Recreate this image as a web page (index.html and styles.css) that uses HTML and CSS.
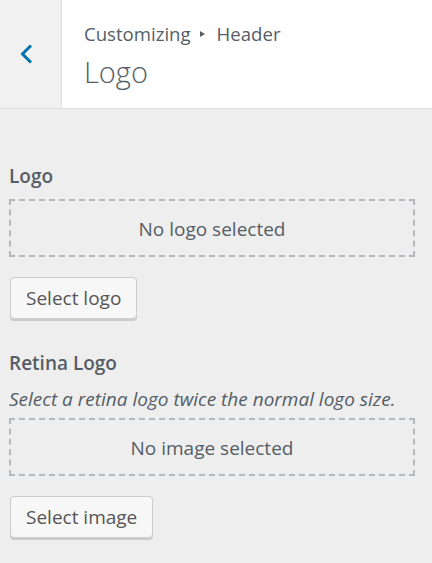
FILE: index.html
```html
<!DOCTYPE html>
<html>
<head>
<meta charset="utf-8">
<link rel="stylesheet" href="styles.css">
</head>
<body>
<div class="panel">
  <header class="head">
    <button class="back" aria-label="Back">
      <svg width="14" height="20" viewBox="0 0 14 20"><path d="M12 1.5 L3.5 10 L12 18.5" fill="none" stroke="#0073aa" stroke-width="3"/></svg>
    </button>
    <div class="titles">
      <div class="crumb">Customizing<span class="arrow"></span>Header</div>
      <h1 class="title">Logo</h1>
    </div>
  </header>
  <section class="body">
    <div class="control">
      <div class="label">Logo</div>
      <div class="placeholder">No logo selected</div>
      <div class="actions"><button class="btn">Select logo</button></div>
    </div>
    <div class="control">
      <div class="label">Retina Logo</div>
      <div class="desc">Select a retina logo twice the normal logo size.</div>
      <div class="placeholder">No image selected</div>
      <div class="actions"><button class="btn">Select image</button></div>
    </div>
  </section>
</div>
</body>
</html>
```
FILE: styles.css
```css
html, body { margin: 0; padding: 0; }
body {
  background: #eeeeee;
  font-family: "Open Sans", "Noto Sans", sans-serif;
  color: #555d66;
  width: 432px;
  height: 563px;
  overflow: hidden;
}
.head {
  display: flex;
  background: #fff;
  border-bottom: 1px solid #dddddd;
  height: 108px;
}
.back {
  width: 62px;
  flex: none;
  background: #f1f1f1;
  border: none;
  border-right: 1px solid #dddddd;
  padding: 0 0 0 19px;
  display: flex;
  align-items: center;
  justify-content: flex-start;
  margin: 0;
}
.back svg { display: block; }
.titles {
  padding: 20px 0 0 22px;
}
.crumb {
  font-size: 18.6px;
  line-height: 28px;
  color: #555d66;
  display: flex;
  align-items: center;
}
.arrow {
  display: inline-block;
  width: 0;
  height: 0;
  border-left: 5px solid #555d66;
  border-top: 3.5px solid transparent;
  border-bottom: 3.5px solid transparent;
  margin: 0 12px 0 9px;
}
.title {
  margin: 6px 0 0;
  font-weight: 300;
  font-size: 29px;
  line-height: 36px;
  color: #555d66;
}
.body {
  padding: 55px 17px 0 9px;
}
.control { margin-bottom: 32px; }
.label {
  font-size: 19px;
  font-weight: 600;
  line-height: 24px;
  color: #555d66;
  margin-bottom: 11px;
}
.desc {
  font-size: 19px;
  font-style: italic;
  line-height: 24px;
  color: #555d66;
  margin-top: 12px;
  margin-bottom: 7px;
}
.placeholder {
  border: 2px dashed #b4b9be;
  display: flex;
  align-items: center;
  justify-content: center;
  font-size: 19px;
  padding-top: 2px;
  box-sizing: content-box;
  height: 52px;
}
.actions { margin-top: 20px; }
.btn {
  font-family: inherit;
  font-size: 19px;
  color: #555;
  background: #f7f7f7;
  border: 1px solid #cccccc;
  border-radius: 4px;
  box-shadow: 0 2px 0 #cccccc;
  height: 42px;
  padding: 0 15px;
  margin: 0 0 0 1px;
  display: block;
}
```
